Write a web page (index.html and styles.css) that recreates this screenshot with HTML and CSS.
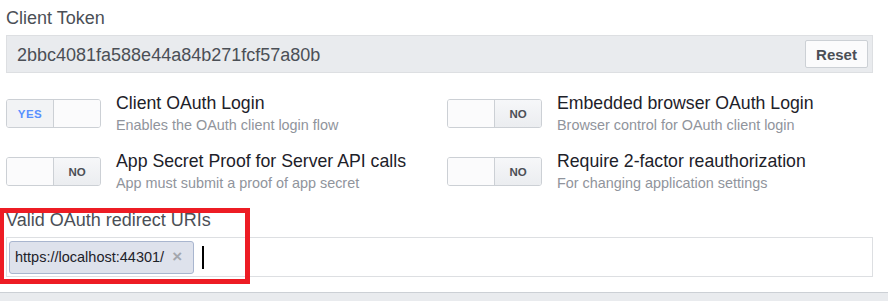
FILE: index.html
```html
<!DOCTYPE html>
<html lang="en">
<head>
  <meta charset="UTF-8">
  <meta name="viewport" content="width=device-width, initial-scale=1.0">
  <title>Client OAuth Settings</title>
  <link rel="stylesheet" href="styles.css">
</head>
<body>
  <div class="page">
    <label class="field-label">Client Token</label>
    <div class="token-field">
      <span class="token-value">2bbc4081fa588e44a84b271fcf57a80b</span>
      <button type="button" class="btn-reset">Reset</button>
    </div>

    <div class="settings">
      <div class="setting">
        <div class="toggle on"><span class="seg label">YES</span><span class="seg"></span></div>
        <div class="setting-text">
          <div class="setting-title">Client OAuth Login</div>
          <div class="setting-desc">Enables the OAuth client login flow</div>
        </div>
      </div>
      <div class="setting">
        <div class="toggle off"><span class="seg"></span><span class="seg label">NO</span></div>
        <div class="setting-text">
          <div class="setting-title">Embedded browser OAuth Login</div>
          <div class="setting-desc">Browser control for OAuth client login</div>
        </div>
      </div>
      <div class="setting">
        <div class="toggle off"><span class="seg"></span><span class="seg label">NO</span></div>
        <div class="setting-text">
          <div class="setting-title">App Secret Proof for Server API calls</div>
          <div class="setting-desc">App must submit a proof of app secret</div>
        </div>
      </div>
      <div class="setting">
        <div class="toggle off"><span class="seg"></span><span class="seg label">NO</span></div>
        <div class="setting-text">
          <div class="setting-title">Require 2-factor reauthorization</div>
          <div class="setting-desc">For changing application settings</div>
        </div>
      </div>
    </div>

    <div class="redirect-field">
      <label class="field-label">Valid OAuth redirect URIs</label>
      <div class="tag-input">
        <span class="tag">https://localhost:44301/<span class="tag-remove">&times;</span></span>
        <span class="caret"></span>
      </div>
      <!-- annotation box from the screenshot -->
      <div class="highlight"></div>
    </div>
  </div>
  <div class="footer-band"></div>
</body>
</html>
```

FILE: styles.css
```css
body {
  margin: 0;
  font-family: "Liberation Sans", Arial, sans-serif;
  color: #1d2129;
  background-color: #fff;
}

.page {
  padding: 0 15px 0 6px;
}

.field-label {
  display: block;
  padding-top: 8px;
  font-size: 18px;
  line-height: 20px;
  color: #4b4f56;
}

.token-field {
  display: flex;
  align-items: center;
  justify-content: space-between;
  box-sizing: border-box;
  height: 38px;
  margin-top: 7px;
  padding: 2px 4px 0 10px;
  background-color: #e9ebee;
  border: 1px solid #dddfe2;
}

.token-value {
  font-size: 18px;
  line-height: 22px;
  color: #4b4f56;
}

.btn-reset {
  box-sizing: border-box;
  width: 63px;
  height: 28px;
  margin-top: -2px;
  padding: 0;
  font-family: inherit;
  font-size: 15px;
  font-weight: bold;
  color: #4b4f56;
  background-color: #fbfbfc;
  border: 1px solid #ccd0d5;
  border-radius: 2px;
  cursor: pointer;
}

.settings {
  display: grid;
  grid-template-columns: 441px 1fr;
  row-gap: 14px;
  margin-top: 19px;
}

.setting {
  display: flex;
  gap: 15px;
}

.toggle {
  display: flex;
  box-sizing: border-box;
  width: 95px;
  height: 29px;
  margin-top: 7px;
  border: 1px solid #ccd0d5;
  border-radius: 3px;
  background-color: #fff;
  overflow: hidden;
  flex-shrink: 0;
}

.toggle .seg {
  flex: 1;
  display: flex;
  align-items: center;
  justify-content: center;
  font-size: 11.5px;
  font-weight: bold;
  background-color: #fbfbfc;
}

.toggle.on .seg:first-child {
  border-right: 1px solid #ccd0d5;
  background-color: #f2f3f5;
  color: #5890ff;
  letter-spacing: 0.5px;
}

.toggle.off .seg:first-child {
  border-right: 1px solid #ccd0d5;
}

.toggle.off .seg.label {
  background: linear-gradient(#f6f7f9, #ebedf0);
  color: #4b4f56;
}

.setting-title {
  font-size: 17.7px;
  line-height: 22px;
  color: #1d2129;
}

.setting-desc {
  font-size: 14.4px;
  line-height: 22px;
  color: #90949c;
}

.redirect-field {
  position: relative;
  margin-top: 16px;
}

.redirect-field .field-label {
  padding-top: 0;
}

.tag-input {
  display: flex;
  align-items: center;
  box-sizing: border-box;
  height: 40px;
  margin-top: 7px;
  padding-left: 2px;
  border: 1px solid #dddfe2;
  background-color: #fff;
}

.tag {
  display: flex;
  align-items: center;
  box-sizing: border-box;
  height: 33px;
  padding: 0 11px 0 5px;
  font-size: 14.5px;
  color: #1d2129;
  background-color: #dee2ec;
  border: 1px solid #a9b6cf;
  border-radius: 3px;
}

.tag-remove {
  margin-left: 8px;
  font-size: 17px;
  font-weight: bold;
  color: #a3a7ae;
}

.caret {
  width: 2px;
  height: 23px;
  margin-left: 8px;
  background-color: #000;
}

.highlight {
  position: absolute;
  top: -2px;
  left: -7px;
  box-sizing: border-box;
  width: 251px;
  height: 76px;
  border: 5px solid #ed1c24;
  pointer-events: none;
}

.footer-band {
  height: 9px;
  margin-top: 15px;
  background-color: #e9ebee;
  border-top: 1px solid #ccd0d5;
}
```
